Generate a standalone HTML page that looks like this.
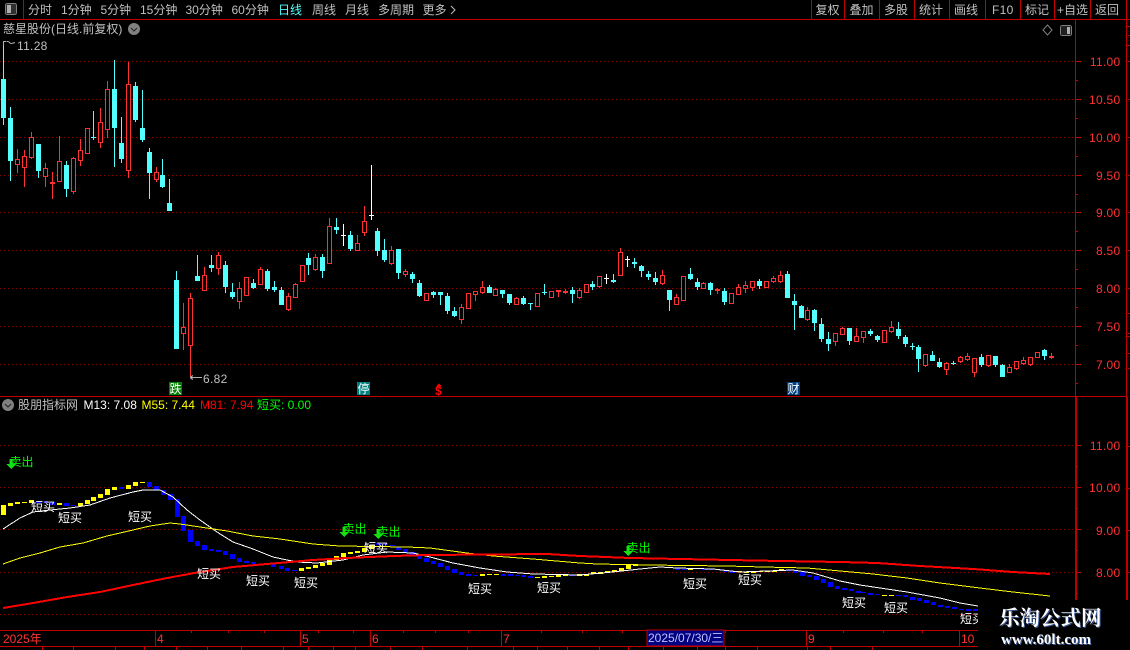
<!DOCTYPE html>
<html><head><meta charset="utf-8"><style>
html,body{margin:0;padding:0;background:#000;width:1130px;height:650px;overflow:hidden}
svg{display:block}
text{font-family:"Liberation Sans","WenQuanYi Zen Hei","Noto Sans CJK SC",sans-serif;font-size:12px;white-space:pre}
.g{fill:#c0c0c0}.r{fill:#ff3232}.w{fill:#fff}.y{fill:#ff0}.gr{fill:#0f0}
.n{letter-spacing:.3px}
</style></head><body>
<svg width="1130" height="650" viewBox="0 0 1130 650" xmlns="http://www.w3.org/2000/svg">
<rect width="1130" height="650" fill="#000"/>
<g shape-rendering="crispEdges">
<!-- grid -->
<path d="M0 61.5H1075M0 99.5H1075M0 137.5H1075M0 175.5H1075M0 212.5H1075M0 250.5H1075M0 288.5H1075M0 326.5H1075M0 364.5H1075M0 445.5H1075M0 487.5H1075M0 529.5H1075M0 572.5H1075M0 614.5H978" stroke="#900000" stroke-width="1" stroke-dasharray="1 3" fill="none"/>
<!-- frame -->
<path d="M0 19.5H1130M23.5 0V19M811.5 0V19M844.5 0V19M879.5 0V19M914.5 0V19M949.5 0V19M985.5 0V19M1020.5 0V19M1054.5 0V19M1090.5 0V19M0 396.5H1126M1075.5 19V600M1126.5 0V600M0 630.5H978M0 646.5H978M1126 45.5H1130M1126 336.5H1130M1126 26.5H1130" stroke="#c00000" fill="none"/>
<path d="M1076.5 397V600M1127.5 397V600" stroke="#c00000" fill="none"/>
<!-- axis ticks -->
<path d="M1076 61.5h5M1076 99.5h5M1076 137.5h5M1076 175.5h5M1076 212.5h5M1076 250.5h5M1076 288.5h5M1076 326.5h5M1076 364.5h5M1076 445.5h5M1076 487.5h5M1076 529.5h5M1076 572.5h5M1076 80.5h2M1076 118.5h2M1076 156.5h2M1076 194.5h2M1076 231.5h2M1076 269.5h2M1076 307.5h2M1076 345.5h2M1076 383.5h2M1076 466.5h2M1076 508.5h2M1076 550.5h2M1076 593.5h2M1128 35.5h2M1128 61.5h2M1128 99.5h2M1128 137.5h2M1128 175.5h2M1128 212.5h2M1128 250.5h2M1128 288.5h2M1128 313.5h2M1128 333.5h2M1128 353.5h2M1128 368.5h2M1128 446.5h2M1128 488.5h2M1128 530.5h2M1128 572.5h2" stroke="#c00000" fill="none"/>
<!-- time axis seps -->
<path d="M155.5 630V646M300.5 630V646M370.5 630V646M501.5 630V646M806.5 630V646M959.5 630V646M191.5 630v3M228.5 630v3M264.5 630v3M318.5 630v3M353.5 630v3M403.5 630v3M435.5 630v3M468.5 630v3M541.5 630v3M582.5 630v3M622.5 630v3M725.5 630v3M843.5 630v3M883.5 630v3M922.5 630v3M42.5 646v4M73.5 646v4M115.5 646v4M144.5 646v4M176.5 646v4M207.5 646v4M241.5 646v4M283.5 646v4M308.5 646v4M333.5 646v4M355.5 646v4M390.5 646v4M422.5 646v4M467.5 646v4M513.5 646v4M537.5 646v4M567.5 646v4M599.5 646v4M628.5 646v4M663.5 646v4M697.5 646v4M725.5 646v4M757.5 646v4M807.5 646v4M830.5 646v4M872.5 646v4" stroke="#c00000" fill="none"/>
<rect x="647" y="630" width="77" height="16" fill="#000080" stroke="#c00000"/>
<!-- cyan wicks -->
<path fill="none" stroke="#54ffff" d="M3.5 42V125M10.5 107V181M38.5 144V178M66.5 161V197M93.5 111V140M114.5 60V167M121.5 117V163M135.5 82V122M142.5 90V142M149.5 148V199M162.5 159V188M169.5 179V211M176.5 271V349M197.5 255V281M211.5 255V272M225.5 261V293M232.5 283V299M253.5 279V289M267.5 269V291M274.5 281V292M281.5 287V305M308.5 253V275M322.5 254V278M336.5 218V234M350.5 231V251M377.5 228V256M384.5 239V262M398.5 249V279M412.5 272V283M419.5 280V297M433.5 291V298M440.5 292V305M447.5 293V314M454.5 307V317M489.5 285V293M502.5 290V298M509.5 294V305M523.5 296V305M530.5 303V310M544.5 284V295M572.5 287V303M592.5 281V290M613.5 274V283M634.5 258V268M641.5 265V277M648.5 271V280M655.5 272V285M669.5 290V311M690.5 268V280M697.5 278V290M710.5 282V295M724.5 288V305M759.5 279V289M787.5 271V298M794.5 294V330M801.5 305V318M814.5 309V331M821.5 318V342M828.5 332V351M849.5 328V345M870.5 329V336M877.5 335V342M898.5 322V339M905.5 335V347M912.5 343V350M918.5 345V372M932.5 351V361M939.5 358V368M953.5 361V365M981.5 354V367M995.5 356V367M1002.5 364V377M1044.5 349V360"/>
<!-- cyan bodies -->
<path fill="none" stroke="#54ffff" stroke-width="5" d="M3.5 79V118M10.5 118V161M38.5 144V171M66.5 165V189M93.5 137V138M114.5 89V128M121.5 143V159M135.5 86V120M142.5 128V140M149.5 152V173M162.5 175V187M169.5 203V211M176.5 280V349M197.5 276V281M211.5 265V268M225.5 265V287M232.5 292V297M253.5 283V288M267.5 271V289M274.5 287V290M281.5 290V305M308.5 258V265M322.5 257V271M336.5 227V230M350.5 235V249M377.5 231V251M384.5 250V260M398.5 249V273M412.5 274V279M419.5 283V296M433.5 292V295M440.5 292V295M447.5 296V311M454.5 311V316M489.5 287V293M502.5 290V294M509.5 294V303M523.5 298V304M530.5 303V304M544.5 292V293M572.5 290V294M592.5 284V287M613.5 280V282M634.5 262V264M641.5 266V271M648.5 274V277M655.5 278V282M669.5 290V300M690.5 274V279M697.5 282V287M710.5 283V290M724.5 291V302M759.5 281V286M787.5 274V298M794.5 301V305M801.5 306V318M814.5 310V323M821.5 324V339M828.5 339V344M849.5 328V341M870.5 331V334M877.5 336V340M898.5 329V336M905.5 337V344M912.5 346V347M918.5 347V359M932.5 355V361M939.5 362V367M953.5 363V364M981.5 357V365M995.5 356V365M1002.5 365V377M1044.5 350V356"/>
<!-- white crosses -->
<path fill="none" stroke="#fff" d="M343.5 224V246M341 235.5h5M371.5 165V220M369 215.5h5M606.5 274V284M604 278.5h5M627.5 256V267M625 259.5h5"/>
<!-- red wicks -->
<path fill="none" stroke="#ff3232" d="M17.5 149V173M24.5 150V187M31.5 132V159M45.5 163V187M52.5 172V199M59.5 136V181M73.5 157V194M80.5 139V166M87.5 128V153M100.5 108V148M107.5 81V138M128.5 62V178M156.5 167V182M183.5 303V350M190.5 293V378M204.5 267V290M218.5 252V275M239.5 282V309M246.5 277V295M260.5 267V284M288.5 293V311M295.5 283V297M302.5 265V281M315.5 254V271M329.5 218V263M357.5 235V250M364.5 206V236M391.5 246V265M405.5 269V277M426.5 293V300M461.5 304V324M468.5 293V308M475.5 291V301M482.5 281V294M495.5 288V295M516.5 297V305M537.5 293V306M551.5 291V297M558.5 290V297M565.5 289V294M579.5 288V299M586.5 284V293M599.5 276V288M620.5 248V275M662.5 270V285M676.5 294V304M683.5 276V300M703.5 282V288M717.5 288V294M731.5 293V303M738.5 284V294M745.5 281V293M752.5 281V291M766.5 281V288M773.5 276V283M780.5 271V283M807.5 307V321M835.5 333V346M842.5 327V335M856.5 328V342M863.5 331V343M884.5 330V342M891.5 321V333M925.5 354V367M946.5 362V375M960.5 356V363M967.5 353V361M974.5 358V377M988.5 355V367M1009.5 364V373M1016.5 361V370M1023.5 357V365M1030.5 357V366M1037.5 352V358M1051.5 353V359"/>
<!-- red filled dojis -->
<path fill="none" stroke="#ff3232" stroke-width="2" d="M50 183h5M556 291h5M563 292h5M715 290h5M1049 357h5"/>
<!-- red hollow bodies -->
<g fill="#000" stroke="#ff3232">
<rect x="15.5" y="159.5" width="4" height="5"/><rect x="22.5" y="156.5" width="4" height="11"/><rect x="29.5" y="137.5" width="4" height="20"/><rect x="43.5" y="168.5" width="4" height="8"/><rect x="57.5" y="161.5" width="4" height="20"/><rect x="71.5" y="158.5" width="4" height="33"/><rect x="78.5" y="150.5" width="4" height="10"/><rect x="85.5" y="128.5" width="4" height="25"/><rect x="98.5" y="122.5" width="4" height="20"/><rect x="105.5" y="89.5" width="4" height="40"/><rect x="126.5" y="84.5" width="4" height="86"/><rect x="154.5" y="172.5" width="4" height="7"/><rect x="181.5" y="327.5" width="4" height="6"/><rect x="188.5" y="298.5" width="4" height="47"/><rect x="202.5" y="275.5" width="4" height="15"/><rect x="216.5" y="255.5" width="4" height="13"/><rect x="237.5" y="288.5" width="4" height="13"/><rect x="244.5" y="277.5" width="4" height="18"/><rect x="258.5" y="269.5" width="4" height="15"/><rect x="286.5" y="296.5" width="4" height="13"/><rect x="293.5" y="284.5" width="4" height="13"/><rect x="300.5" y="265.5" width="4" height="16"/><rect x="313.5" y="257.5" width="4" height="12"/><rect x="327.5" y="226.5" width="4" height="37"/><rect x="355.5" y="243.5" width="4" height="7"/><rect x="362.5" y="221.5" width="4" height="11"/><rect x="389.5" y="250.5" width="4" height="13"/><rect x="403.5" y="271.5" width="4" height="3"/><rect x="424.5" y="293.5" width="4" height="7"/><rect x="459.5" y="307.5" width="4" height="12"/><rect x="466.5" y="293.5" width="4" height="15"/><rect x="473.5" y="291.5" width="4" height="3"/><rect x="480.5" y="287.5" width="4" height="5"/><rect x="493.5" y="289.5" width="4" height="6"/><rect x="514.5" y="298.5" width="4" height="6"/><rect x="535.5" y="293.5" width="4" height="13"/><rect x="549.5" y="291.5" width="4" height="6"/><rect x="577.5" y="290.5" width="4" height="7"/><rect x="584.5" y="284.5" width="4" height="8"/><rect x="597.5" y="276.5" width="4" height="10"/><rect x="618.5" y="252.5" width="4" height="23"/><rect x="660.5" y="275.5" width="4" height="8"/><rect x="674.5" y="297.5" width="4" height="7"/><rect x="681.5" y="276.5" width="4" height="24"/><rect x="701.5" y="283.5" width="4" height="5"/><rect x="729.5" y="293.5" width="4" height="10"/><rect x="736.5" y="287.5" width="4" height="7"/><rect x="743.5" y="285.5" width="4" height="3"/><rect x="750.5" y="281.5" width="4" height="6"/><rect x="764.5" y="281.5" width="4" height="6"/><rect x="771.5" y="278.5" width="4" height="3"/><rect x="778.5" y="275.5" width="4" height="6"/><rect x="805.5" y="310.5" width="4" height="9"/><rect x="833.5" y="333.5" width="4" height="8"/><rect x="840.5" y="328.5" width="4" height="6"/><rect x="854.5" y="336.5" width="4" height="5"/><rect x="861.5" y="331.5" width="4" height="6"/><rect x="882.5" y="330.5" width="4" height="12"/><rect x="889.5" y="327.5" width="4" height="4"/><rect x="923.5" y="354.5" width="4" height="11"/><rect x="944.5" y="363.5" width="4" height="6"/><rect x="958.5" y="357.5" width="4" height="4"/><rect x="965.5" y="356.5" width="4" height="3"/><rect x="972.5" y="358.5" width="4" height="14"/><rect x="986.5" y="355.5" width="4" height="10"/><rect x="1007.5" y="367.5" width="4" height="5"/><rect x="1014.5" y="361.5" width="4" height="7"/><rect x="1021.5" y="360.5" width="4" height="3"/><rect x="1028.5" y="357.5" width="4" height="7"/><rect x="1035.5" y="352.5" width="4" height="5"/>
</g>
<!-- marker boxes -->
<rect x="169" y="382" width="13" height="13" fill="#008000"/>
<rect x="357" y="382" width="13" height="13" fill="#008080"/>
<rect x="787" y="382" width="13" height="13" fill="#004080"/>
<!-- indicator blocks yellow -->
<path fill="none" stroke="#ff0" stroke-width="5" d="M3.5 505V515M10.5 503V506M17.5 502V504M24.5 502V503M31.5 500V503M59.5 503V505M80.5 503V506M87.5 500V504M93.5 497V501M100.5 494V498M107.5 489V495M114.5 487V490M128.5 485V489M135.5 482V486M142.5 482V483M301.5 568V571M308.5 567V569M315.5 565V568M322.5 563V566M329.5 560V565M336.5 556V560M343.5 553V557M350.5 552V554M357.5 551V553M364.5 548V552M371.5 545V549M482.5 574V576M489.5 574V575M496.5 574V575M537.5 577V578M544.5 576V578M551.5 576V577M558.5 575V577M565.5 575V576M579.5 574V576M586.5 574V576M593.5 572V574M600.5 572V574M607.5 571V573M614.5 570V572M621.5 568V571M628.5 564V569M635.5 564V566M690.5 568V570M739.5 571V572M746.5 572V573M753.5 571V573M760.5 571V572M767.5 571V572M774.5 571V572M781.5 569V571M884.5 595V596M891.5 595V596"/>
<!-- indicator blocks blue -->
<path fill="none" stroke="#0000ff" stroke-width="5" d="M38.5 501V503M45.5 501V503M52.5 502V505M66.5 503V506M73.5 505V506M121.5 487V489M149.5 482V487M156.5 486V490M163.5 490V495M170.5 494V500M177.5 499V517M183.5 516V531M190.5 530V542M197.5 541V546M204.5 545V550M211.5 549V551M218.5 550V552M225.5 551V555M232.5 554V559M239.5 558V562M246.5 561V563M253.5 562V564M273.5 564V567M281.5 566V569M287.5 568V571M294.5 570V571M378.5 543V545M385.5 543V545M392.5 545V546M398.5 547V550M405.5 549V553M412.5 552V555M419.5 556V559M426.5 558V562M433.5 561V564M440.5 563V567M447.5 566V570M454.5 569V573M461.5 572V575M468.5 574V576M475.5 575V576M503.5 574V576M510.5 574V576M517.5 575V576M523.5 575V577M530.5 576V578M572.5 575V576M670.5 567V568M677.5 568V570M684.5 569V570M697.5 568V569M704.5 569V570M711.5 569V570M718.5 569V570M725.5 570V572M732.5 571V573M788.5 570V571M795.5 570V573M802.5 572V576M809.5 575V577M816.5 576V580M823.5 579V583M830.5 582V587M837.5 586V589M844.5 588V590M851.5 589V591M858.5 591V593M863.5 592V593M870.5 593V595M877.5 594V595M898.5 595V596M905.5 595V597M912.5 597V600M919.5 598V601M926.5 600V603M933.5 602V605M940.5 605V607M947.5 606V608M954.5 607V609M961.5 609V610M968.5 609V611M975.5 609V611"/>
<!-- M13 white -->
<polyline fill="none" stroke="#fff" points="3,529 20,518 33,512 50,510 70,508 90,505 110,498 133,492 143,490 160,490 173,497 187,510 200,520 217,532 233,542 253,549 273,557 287,560 297,562 317,563 343,560 363,555 387,552 413,553 430,557 453,563 480,568 507,572 533,574 580,575 613,572 640,569 660,567 677,568 713,569 740,572 793,570 813,573 840,581 860,585 907,592 940,598 960,603 978,606"/>
<!-- M55 yellow -->
<polyline fill="none" stroke="#ff0" points="3,564 20,558 40,553 60,547 83,543 107,536 133,530 150,526 170,523 180,524 200,527 227,531 253,536 280,539 313,544 340,546 407,547 430,548 467,553 493,556 533,559 580,563 597,564 647,565 727,566 763,567 807,568 840,571 873,574 907,578 940,583 980,588 1013,592 1050,596"/>
<!-- M81 red -->
<polyline fill="none" stroke="#f00" stroke-width="2" points="3,608 33,603 67,597 100,592 133,585 167,578 200,572 233,567 267,564 313,560 347,558 393,556 427,555 547,554 580,556 630,558 680,559 730,560 780,561 840,562 877,563 920,566 973,569 1013,572 1050,574"/>
<!-- arrows green -->
<path fill="#18d818" d="M6 464h10l-5 5zM339 532h10l-5 5zM373 534h10l-5 5zM623 551h10l-5 5z"/>
<path stroke="#18d818" stroke-width="3" d="M11 459v6M344 527v6M378 529v6M628 546v6"/>
<!-- icons -->
<rect x="5.5" y="3.5" width="11" height="11" rx="2" fill="#303030" stroke="#808080"/><rect x="7" y="5" width="4" height="8" fill="#b0b0b0"/>
<rect x="1060.5" y="25.5" width="11" height="10" rx="2" fill="#202020" stroke="#808080"/><rect x="1067" y="27" width="3" height="7" fill="#b0b0b0"/>
<!-- 6.82 arrow -->
<path d="M190 377.5h12M190 377.5l3-2M190 377.5l3 2" stroke="#b0b0b0" fill="none"/>
<path d="M3.5 46V41.5h3M7 41.5c2-1 3 3 5 2s2-1 3-.5" stroke="#b0b0b0" fill="none"/>
<!-- watermark mask -->
<rect x="978" y="601" width="152" height="49" fill="#000"/>
</g>
<circle cx="134" cy="29" r="6" fill="#808080"/><path d="M131 28l3 3 3-3" stroke="#222" fill="none"/>
<circle cx="8" cy="405" r="6" fill="#808080"/><path d="M5 404l3 3 3-3" stroke="#222" fill="none"/>
<path d="M1047.5 25l4.5 5-4.5 5-4.5-5z" fill="none" stroke="#808080"/>

<!-- toolbar -->
<g class="g">
<text x="28" y="14">分时</text><text x="61" y="14">1分钟</text><text x="100.5" y="14">5分钟</text><text x="140" y="14">15分钟</text><text x="185.5" y="14">30分钟</text><text x="231.5" y="14">60分钟</text>
<text x="312" y="14">周线</text><text x="345" y="14">月线</text><text x="378" y="14">多周期</text><text x="422.5" y="14">更多</text>
<path d="M451 6l4 4-4 4" fill="none" stroke="#c0c0c0"/>
<text x="815.5" y="14">复权</text><text x="849.5" y="14">叠加</text><text x="884" y="14">多股</text><text x="919" y="14">统计</text><text x="954" y="14">画线</text><text x="992" y="14" class="n">F10</text><text x="1025" y="14">标记</text><text x="1057" y="14">+自选</text><text x="1095" y="14">返回</text>
<text x="3" y="33">慈星股份(日线.前复权)</text>
<text x="17" y="50" class="n">11.28</text>
<text x="203" y="383" class="n">6.82</text>
<text x="18" y="409">股朋指标网</text>
</g>
<text x="278" y="14" fill="#54ffff">日线</text>
<!-- price axis -->
<g class="r n" text-anchor="end">
<text x="1120.5" y="66">11.00</text><text x="1120.5" y="104">10.50</text><text x="1120.5" y="142">10.00</text><text x="1120.5" y="180">9.50</text><text x="1120.5" y="217">9.00</text><text x="1120.5" y="255">8.50</text><text x="1120.5" y="293">8.00</text><text x="1120.5" y="331">7.50</text><text x="1120.5" y="369">7.00</text>
<text x="1120.5" y="450">11.00</text><text x="1120.5" y="492">10.00</text><text x="1120.5" y="535">9.00</text><text x="1120.5" y="577">8.00</text>
</g>
<!-- markers -->
<text x="169.5" y="393" class="w">跌</text>
<text x="357.5" y="393" class="w">停</text>
<text x="787.5" y="393" class="w">财</text>
<text x="435" y="395" style="font-weight:bold" fill="#f00">$</text>
<path d="M439 383.5l3 3h-6z" fill="#f00"/>
<!-- legend -->
<text x="83.5" y="409" class="w">M13: 7.08</text>
<text x="141.5" y="409" class="y">M55: 7.44</text>
<text x="200" y="409" fill="#f00">M81: 7.94</text>
<text x="257" y="409" class="gr">短买: 0.00</text>
<!-- 短买 -->
<g class="w">
<text x="31" y="511">短买</text><text x="58" y="522">短买</text><text x="128" y="521">短买</text><text x="197" y="578">短买</text><text x="246" y="585">短买</text><text x="294" y="587">短买</text><text x="364" y="552">短买</text><text x="468" y="593">短买</text><text x="537" y="592">短买</text><text x="683" y="588">短买</text><text x="738" y="584">短买</text><text x="842" y="607">短买</text><text x="884" y="612">短买</text>
<svg x="950" y="605" width="28" height="25"><text x="10" y="18" class="w">短买</text></svg>
</g>
<!-- 卖出 -->
<g class="gr">
<text x="9.5" y="466">卖出</text><text x="342.5" y="533">卖出</text><text x="376.5" y="536">卖出</text><text x="626.5" y="552">卖出</text>
</g>
<!-- time axis labels -->
<g class="r">
<text x="3" y="643">2025年</text><text x="157" y="643">4</text><text x="302" y="643">5</text><text x="372" y="643">6</text><text x="503" y="643">7</text><text x="808" y="643">9</text><text x="961" y="643">10</text>
</g>
<text x="648" y="642" fill="#c0c0ff">2025/07/30/三</text>
<!-- watermark -->
<text x="1000" y="626" style="font-family:'Noto Serif CJK SC','Liberation Serif',serif;font-size:20.5px;font-weight:bold" fill="#3a5a9a">乐淘公式网</text>
<text x="999" y="625" style="font-family:'Noto Serif CJK SC','Liberation Serif',serif;font-size:20.5px;font-weight:bold" fill="#fff">乐淘公式网</text>
<text x="1002" y="645" style="font-family:'Liberation Serif',serif;font-size:15px;font-weight:bold" fill="#3a5a9a">www.60lt.com</text>
<text x="1001" y="644" style="font-family:'Liberation Serif',serif;font-size:15px;font-weight:bold" fill="#fff">www.60lt.com</text>
</svg>
</body></html>
